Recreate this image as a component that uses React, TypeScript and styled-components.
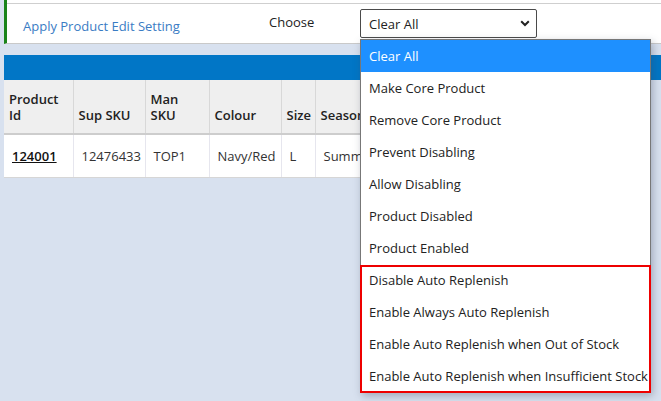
import styled, { createGlobalStyle } from "styled-components";

const GlobalStyle = createGlobalStyle`
  html, body {
    margin: 0;
    padding: 0;
    background: #d8e1ef;
    font-family: "Open Sans", "Liberation Sans", sans-serif;
    font-size: 13px;
    color: #222;
  }
`;

const options = [
  "Clear All",
  "Make Core Product",
  "Remove Core Product",
  "Prevent Disabling",
  "Allow Disabling",
  "Product Disabled",
  "Product Enabled",
];

const replenishOptions = [
  "Disable Auto Replenish",
  "Enable Always Auto Replenish",
  "Enable Auto Replenish when Out of Stock",
  "Enable Auto Replenish when Insufficient Stock",
];

const columns = [
  { title: "Product\nId", width: 69 },
  { title: "Sup SKU", width: 72 },
  { title: "Man\nSKU", width: 64 },
  { title: "Colour", width: 72 },
  { title: "Size", width: 34 },
  { title: "Season", width: 90 },
  { title: "", width: 120 },
  { title: "", width: 120 },
];

const tableWidth = columns.reduce((sum, c) => sum + c.width, 0);

const row = ["124001", "12476433", "TOP1", "Navy/Red", "L", "Summer", "", ""];

const App = () => {
  return (
    <Page>
      <GlobalStyle />
      <SettingsBar>
        <SettingsRow>
          <ActionLink>Apply Product Edit Setting</ActionLink>
          <ChooseLabel>Choose</ChooseLabel>
          <SelectWrap>
            <SelectBox>
              <span>Clear All</span>
              <svg width="10" height="7" viewBox="0 0 10 7">
                <path
                  d="M1.2 1.3 L5 5 L8.8 1.3"
                  fill="none"
                  stroke="#222"
                  strokeWidth="2"
                />
              </svg>
            </SelectBox>
            <Menu>
              {options.map((o, i) => (
                <MenuItem key={o} $active={i === 0}>
                  {o}
                </MenuItem>
              ))}
              <Highlight>
                {replenishOptions.map((o) => (
                  <MenuItem key={o}>{o}</MenuItem>
                ))}
              </Highlight>
            </Menu>
          </SelectWrap>
        </SettingsRow>
      </SettingsBar>

      <TableCard>
        <TableBar />
        <Table style={{ width: tableWidth }}>
          <thead>
            <tr>
              {columns.map((c, i) => (
                <Th key={i} style={{ width: c.width }}>
                  {c.title}
                </Th>
              ))}
            </tr>
          </thead>
          <tbody>
            <tr>
              {row.map((v, i) =>
                i === 0 ? (
                  <Td key={i}>
                    <IdLink>{v}</IdLink>
                  </Td>
                ) : (
                  <Td key={i}>{v}</Td>
                )
              )}
            </tr>
          </tbody>
        </Table>
      </TableCard>
    </Page>
  );
};

export default App;

const Page = styled.div`
  padding-left: 4px;
  height: 401px;
  overflow: hidden;
`;

const SettingsBar = styled.div`
  background: #fff;
  border-left: 3px solid #1a841a;
  border-bottom: 1px solid #c9c9c9;
  padding-top: 3px;
`;

const SettingsRow = styled.div`
  display: flex;
  align-items: center;
  height: 39px;
  border-top: 1px solid #cfcfcf;
`;

const ActionLink = styled.a`
  width: 246px;
  padding-left: 16px;
  padding-top: 4px;
  color: #3a7cc4;
  cursor: pointer;
`;

const ChooseLabel = styled.span`
  width: 91px;
  padding-bottom: 4px;
  color: #222;
`;

const SelectWrap = styled.div`
  position: relative;
  width: 177px;
`;

const SelectBox = styled.div`
  box-sizing: border-box;
  height: 29px;
  border: 1px solid #4a4a4a;
  border-radius: 2px;
  background: #fff;
  display: flex;
  align-items: center;
  justify-content: space-between;
  padding: 0 6px 0 8px;
  color: #222;
`;

const Menu = styled.div`
  position: absolute;
  top: 30px;
  left: 0;
  width: 291px;
  box-sizing: border-box;
  background: #fff;
  border: 1px solid #777;
  box-shadow: 2px 3px 8px rgba(60, 70, 90, 0.35);
  z-index: 10;
`;

const MenuItem = styled.div<{ $active?: boolean }>`
  height: 32px;
  line-height: 32px;
  padding-left: 8px;
  white-space: nowrap;
  background: ${(p) => (p.$active ? "#1e90ff" : "#fff")};
  color: ${(p) => (p.$active ? "#fff" : "#222")};
`;

const Highlight = styled.div`
  position: relative;
  &::after {
    content: "";
    position: absolute;
    top: 1px;
    bottom: -1px;
    left: -1px;
    right: -1px;
    border: 2px solid #ee0000;
    pointer-events: none;
  }
`;

const TableCard = styled.div`
  margin-top: 11px;
`;

const TableBar = styled.div`
  height: 25px;
  background: #0176c6;
`;

const Table = styled.table`
  border-collapse: collapse;
  table-layout: fixed;
`;

const Th = styled.th`
  box-sizing: border-box;
  background: #efefef;
  height: 54px;
  padding: 0 4px 10px 5px;
  text-align: left;
  vertical-align: bottom;
  font-weight: 600;
  white-space: pre-line;
  line-height: 16px;
  color: #222;
  border-right: 1px solid #d8d8d8;
  border-bottom: 2px solid #cdcdcd;
`;

const Td = styled.td`
  box-sizing: border-box;
  background: #fff;
  height: 43px;
  padding: 0 4px 0 8px;
  color: #333;
  border-right: 1px solid #e6e6ee;
  border-bottom: 1px solid #d6d6d6;
  white-space: nowrap;
  overflow: hidden;
`;

const IdLink = styled.a`
  font-weight: 600;
  color: #111;
  text-decoration: underline;
`;
